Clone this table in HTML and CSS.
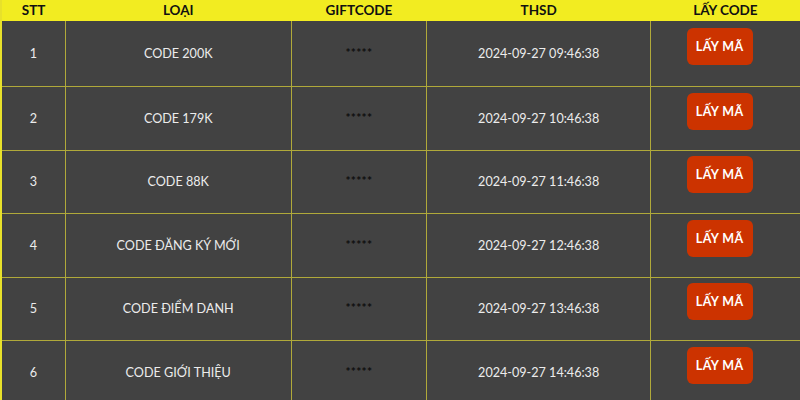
FILE: index.html
```html
<!DOCTYPE html>
<html lang="vi">
<head>
<meta charset="utf-8">
<link rel="stylesheet" href="styles.css">
</head>
<body>
<table class="codes">
  <colgroup>
    <col class="c-stt"><col class="c-type"><col class="c-gift"><col class="c-date"><col class="c-act">
  </colgroup>
  <thead>
    <tr><th>STT</th><th>LOẠI</th><th>GIFTCODE</th><th>THSD</th><th>LẤY CODE</th></tr>
  </thead>
  <tbody>
    <tr><td>1</td><td>CODE 200K</td><td><span class="stars">*****</span></td><td>2024-09-27 09:46:38</td><td><span class="btn">LẤY MÃ</span></td></tr>
    <tr><td>2</td><td>CODE 179K</td><td><span class="stars">*****</span></td><td>2024-09-27 10:46:38</td><td><span class="btn">LẤY MÃ</span></td></tr>
    <tr><td>3</td><td>CODE 88K</td><td><span class="stars">*****</span></td><td>2024-09-27 11:46:38</td><td><span class="btn">LẤY MÃ</span></td></tr>
    <tr><td>4</td><td>CODE ĐĂNG KÝ MỚI</td><td><span class="stars">*****</span></td><td>2024-09-27 12:46:38</td><td><span class="btn">LẤY MÃ</span></td></tr>
    <tr><td>5</td><td>CODE ĐIỂM DANH</td><td><span class="stars">*****</span></td><td>2024-09-27 13:46:38</td><td><span class="btn">LẤY MÃ</span></td></tr>
    <tr><td>6</td><td>CODE GIỚI THIỆU</td><td><span class="stars">*****</span></td><td>2024-09-27 14:46:38</td><td><span class="btn">LẤY MÃ</span></td></tr>
  </tbody>
</table>
</body>
</html>
```
FILE: styles.css
```css
html, body {
  margin: 0;
  padding: 0;
  background: #424242;
  font-family: Lato, "Open Sans", sans-serif;
  overflow: hidden;
}
.codes {
  width: 800px;
  border-collapse: collapse;
  table-layout: fixed;
  border-left: 2px solid #e8e12a;
}
.c-stt { width: 64px; }
.c-type { width: 226px; }
.c-gift { width: 135px; }
.c-date { width: 224px; }
.c-act { width: 149px; }
.codes th {
  background: #f2ec21;
  color: #111;
  font-weight: 700;
  font-size: 13.5px;
  height: 21px;
  padding: 0 0 2px;
  box-sizing: border-box;
  text-align: center;
  vertical-align: middle;
  line-height: 16px;
}
.codes td {
  height: 62.5px;
  padding: 0;
  text-align: center;
  vertical-align: middle;
  color: #ececec;
  font-size: 12.6px;
  border: 1px solid #b0a93a;
}
.codes tbody tr:first-child td {
  border-top: none;
  height: 65px;
}
.codes tr td:first-child { border-left: none; }
.codes tr td:last-child { border-right: none; }
.stars {
  display: inline-block;
  color: #0e0e0e;
  font-size: 12px;
  font-weight: 700;
  letter-spacing: 0.3px;
  margin-bottom: 2px;
}
.btn {
  display: inline-block;
  width: 66px;
  height: 37px;
  line-height: 37px;
  border-radius: 6px;
  background: #cc3300;
  color: #fff;
  font-weight: 700;
  font-size: 12.5px;
  letter-spacing: 0.4px;
  margin: 0 12px 14px 0;
  vertical-align: middle;
}
```
